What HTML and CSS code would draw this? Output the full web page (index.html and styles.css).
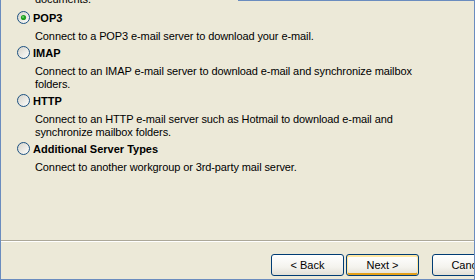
FILE: index.html
```html
<!DOCTYPE html>
<html lang="en">
<head>
    <meta charset="UTF-8">
    <title>E-mail Accounts</title>
    <link rel="stylesheet" href="styles.css">
</head>
<body>
    <div class="wizard">
        <div class="options">
            <p class="desc clipped">documents.</p>

            <div class="option">
                <label class="choice">
                    <svg class="radio" width="13" height="13" viewBox="0 0 13 13">
                        <defs>
                            <linearGradient id="rg" x1="0" y1="0" x2="1" y2="1">
                                <stop offset="0" stop-color="#d4d2c8"/>
                                <stop offset="1" stop-color="#ffffff"/>
                            </linearGradient>
                        </defs>
                        <circle cx="6.5" cy="6.5" r="6" fill="url(#rg)" stroke="#1c5180"/>
                        <circle cx="6.5" cy="6.5" r="2.6" fill="#21a121"/>
                        <circle cx="6" cy="6" r="1" fill="#6fd66f"/>
                    </svg>
                    POP3
                </label>
                <p class="desc">Connect to a POP3 e-mail server to download your e-mail.</p>
            </div>

            <div class="option">
                <label class="choice">
                    <svg class="radio" width="13" height="13" viewBox="0 0 13 13">
                        <circle cx="6.5" cy="6.5" r="6" fill="url(#rg)" stroke="#1c5180"/>
                    </svg>
                    IMAP
                </label>
                <p class="desc">Connect to an IMAP e-mail server to download e-mail and synchronize mailbox folders.</p>
            </div>

            <div class="option">
                <label class="choice">
                    <svg class="radio" width="13" height="13" viewBox="0 0 13 13">
                        <circle cx="6.5" cy="6.5" r="6" fill="url(#rg)" stroke="#1c5180"/>
                    </svg>
                    HTTP
                </label>
                <p class="desc">Connect to an HTTP e-mail server such as Hotmail to download e-mail and synchronize mailbox folders.</p>
            </div>

            <div class="option">
                <label class="choice">
                    <svg class="radio" width="13" height="13" viewBox="0 0 13 13">
                        <circle cx="6.5" cy="6.5" r="6" fill="url(#rg)" stroke="#1c5180"/>
                    </svg>
                    Additional Server Types
                </label>
                <p class="desc">Connect to another workgroup or 3rd-party mail server.</p>
            </div>
        </div>

        <div class="footer">
            <button class="btn">&lt; Back</button>
            <button class="btn default">Next &gt;</button>
            <button class="btn cancel">Cancel</button>
        </div>
    </div>
</body>
</html>
```

FILE: styles.css
```css
* {
    margin: 0;
    padding: 0;
    box-sizing: border-box;
}

body {
    font-family: Tahoma, "Liberation Sans", Arial, sans-serif;
    font-size: 11px;
    color: #000;
    background: #ece9d8;
    width: 475px;
    height: 280px;
    overflow: hidden;
}

.wizard {
    position: relative;
    width: 475px;
    height: 280px;
    display: flex;
    flex-direction: column;
    background: #ece9d8;
    border-left: 1px solid #6a8cbf;
    border-right: 1px solid #6a8cbf;
    border-bottom: 1px solid #6a8cbf;
    overflow: hidden;
}

.wizard::before {
    content: "";
    position: absolute;
    top: 0;
    left: 237px;
    right: 0;
    height: 1px;
    background: #6a8cbf;
}

.options {
    flex: 1;
    padding-left: 16px;
    overflow: hidden;
}

.desc {
    margin: 6px 0 0 18px;
    max-width: 400px;
    line-height: 13px;
    letter-spacing: -0.1px;
}

.desc.clipped {
    margin-top: -7px;
}

.option {
    margin-top: 3px;
}

.option:first-of-type {
    margin-top: 5px;
}

.choice {
    display: flex;
    align-items: center;
    gap: 3px;
    height: 13px;
    font-weight: bold;
}

.radio {
    flex-shrink: 0;
}

.footer {
    height: 39px;
    border-top: 1px solid #aca899;
    box-shadow: inset 0 1px 0 #fff;
    display: flex;
    align-items: flex-start;
    padding: 13px 0 0 270px;
    gap: 2px;
}

.btn {
    flex-shrink: 0;
    width: 73px;
    height: 22px;
    font-family: inherit;
    font-size: 11px;
    color: #000;
    border: 1px solid #003c74;
    border-radius: 3px;
    background: linear-gradient(#ffffff 0%, #f4f3ee 60%, #e3e0d6 100%);
}

.btn.default {
    box-shadow: inset 0 1px 0 1px #ffe7a2, inset 0 -1px 0 1px #e5a01a;
}

.btn.cancel {
    margin-left: 11px;
}
```
